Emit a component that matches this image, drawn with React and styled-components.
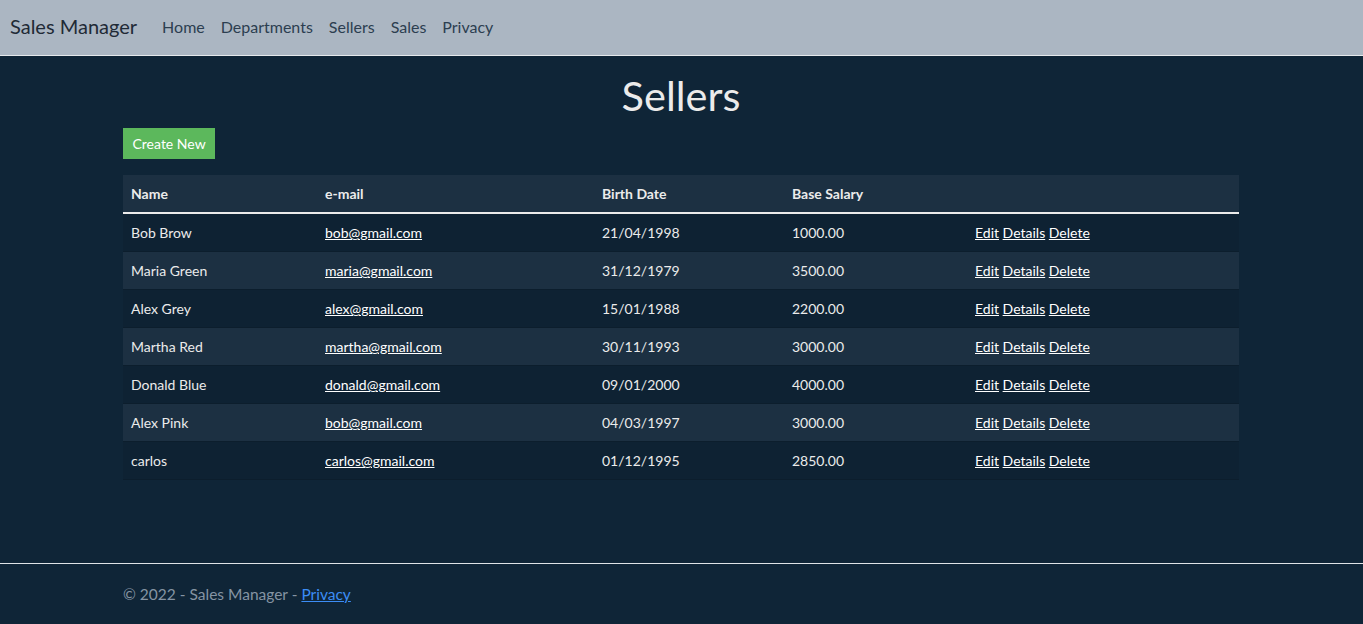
import React from "react";
import styled, { createGlobalStyle } from "styled-components";

const sellers = [
  ["Bob Brow", "bob@gmail.com", "21/04/1998", "1000.00"],
  ["Maria Green", "maria@gmail.com", "31/12/1979", "3500.00"],
  ["Alex Grey", "alex@gmail.com", "15/01/1988", "2200.00"],
  ["Martha Red", "martha@gmail.com", "30/11/1993", "3000.00"],
  ["Donald Blue", "donald@gmail.com", "09/01/2000", "4000.00"],
  ["Alex Pink", "bob@gmail.com", "04/03/1997", "3000.00"],
  ["carlos", "carlos@gmail.com", "01/12/1995", "2850.00"],
];

const Global = createGlobalStyle`
  html, body { margin: 0; padding: 0; }
  body {
    background: #0f2537;
    color: #ebebeb;
    font-family: Lato, "Open Sans", sans-serif;
    font-size: 15px;
  }
`;

const Page = styled.div`
  min-height: 624px;
  display: flex;
  flex-direction: column;
`;

const Navbar = styled.nav`
  height: 56px;
  background: #abb6c2;
  border-bottom: 1px solid #e6e9ec;
  display: flex;
  align-items: center;
  padding: 0 10px 2px;
  box-sizing: border-box;
`;

const Brand = styled.a`
  font-size: 20px;
  color: #1f2a36;
  margin-right: 17px;
  margin-bottom: 1px;
`;

const NavLink = styled.a`
  font-size: 16px;
  color: #2c3e50;
  padding: 0 8px;
`;

const Container = styled.main`
  width: 1116px;
  margin: 0 auto;
  padding-right: 1px;
  flex: 1;
`;

const Title = styled.h1`
  font-size: 41.5px;
  font-weight: 400;
  text-align: center;
  margin: 15px 0 9px;
  line-height: 48px;
`;

const Button = styled.button`
  background: #5cb85c;
  color: #fff;
  border: none;
  font-family: inherit;
  font-size: 14px;
  height: 31px;
  padding: 0 9.5px;
  margin-bottom: 16px;
`;

const Table = styled.table`
  width: 1116px;
  table-layout: fixed;
  border-collapse: collapse;
  font-size: 14px;
`;

const Th = styled.th`
  box-sizing: border-box;
  text-align: left;
  font-weight: 700;
  padding: 0 8px;
  height: 38px;
  background: #1c3042;
  border-bottom: 2px solid #ebebeb;
  width: ${(p) => p.$w}px;
`;

const Tr = styled.tr`
  background: ${(p) => (p.$odd ? "#1c3042" : "#0e2233")};
`;

const Td = styled.td`
  padding: 0 8px;
  height: 37px;
  border-bottom: 1px solid #0c1e2d;
  a { color: #fff; text-decoration: underline; }
`;

const Footer = styled.footer`
  border-top: 1px solid #dfe3e7;
  height: 60px;
  margin-top: 82px;
`;

const FooterInner = styled.div`
  width: 1116px;
  margin: 0 auto;
  padding: 21px 1px 0 0;
  color: #8594a3;
  font-size: 15.5px;
  a { color: #3c8df5; }
`;

const widths = [194, 277, 190, 183, 272];

export default function App() {
  return (
    <Page>
      <Global />
      <Navbar>
        <Brand>Sales Manager</Brand>
        {["Home", "Departments", "Sellers", "Sales", "Privacy"].map((l) => (
          <NavLink key={l}>{l}</NavLink>
        ))}
      </Navbar>
      <Container>
        <Title>Sellers</Title>
        <Button>Create New</Button>
        <Table>
          <thead>
            <tr>
              {["Name", "e-mail", "Birth Date", "Base Salary", ""].map((h, i) => (
                <Th key={i} $w={widths[i]}>{h}</Th>
              ))}
            </tr>
          </thead>
          <tbody>
            {sellers.map((s, i) => (
              <Tr key={i} $odd={i % 2 === 1}>
                <Td>{s[0]}</Td>
                <Td><a href="#">{s[1]}</a></Td>
                <Td>{s[2]}</Td>
                <Td>{s[3]}</Td>
                <Td>
                  <a href="#">Edit</a> <a href="#">Details</a> <a href="#">Delete</a>
                </Td>
              </Tr>
            ))}
          </tbody>
        </Table>
      </Container>
      <Footer>
        <FooterInner>
          © 2022 - Sales Manager - <a href="#">Privacy</a>
        </FooterInner>
      </Footer>
    </Page>
  );
}
